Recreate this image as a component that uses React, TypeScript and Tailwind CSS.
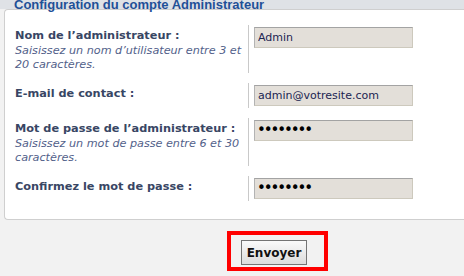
import React from "react";

const font = { fontFamily: '"DejaVu Sans", Verdana, sans-serif' };
const titleFont = { fontFamily: '"Liberation Sans", Arial, sans-serif' };

function Row({
  label,
  hint,
  value,
  tall,
  password,
}: {
  label: string;
  hint?: React.ReactNode;
  value: string;
  tall?: boolean;
  password?: boolean;
}) {
  return (
    <div className={`grid grid-cols-[243px_1fr] ${tall ? "h-[48px]" : "h-[25px]"}`}>
      <div className="pl-[10px] pt-[4px]">
        <div className="text-[11.3px] leading-[14px] font-bold text-[#384664] whitespace-nowrap">{label}</div>
        {hint && (
          <div className="mt-[1px] text-[11.2px] leading-[14px] italic text-[#52618a] pr-[4px]">{hint}</div>
        )}
      </div>
      <div className="border-l border-[#c9c9c9] pl-[5px] pt-[2px]">
        {password ? (
          <input
            readOnly
            type="password"
            value={value}
            className="block w-[159px] h-[21px] bg-[#e3dfd9] border border-[#cdc9bd] border-t-[#a3a3a3] border-l-[#b3b3b3] pl-[2px] text-[15px] tracking-[-2.1px] text-black outline-none"
            style={font}
          />
        ) : (
          <input
            readOnly
            type="text"
            value={value}
            className="block w-[159px] h-[21px] bg-[#e3dfd9] border border-[#cdc9bd] border-t-[#a3a3a3] border-l-[#b3b3b3] px-[3px] text-[11px] text-[#1b2552] outline-none"
            style={font}
          />
        )}
      </div>
    </div>
  );
}

export default function App() {
  return (
    <div className="w-[464px] h-[276px] bg-[#f2f2f2] overflow-hidden" style={font}>
      <div className="flex h-[9px] bg-[#dfe2e6] relative z-10">
        <div
          className="pl-[14px] -mt-[2px] h-[14px] text-[13px] leading-[14px] font-bold text-[#1f5097] whitespace-nowrap"
          style={titleFont}
        >
          Configuration du compte Administrateur
        </div>
      </div>
      <div className="ml-[4px] h-[211px] bg-white border border-r-0 border-[#cfcfcf] rounded-l-[4px] pt-[15px] flex flex-col gap-[10px]">
        <Row
          tall
          label="Nom de l’administrateur :"
          hint={<>Saisissez un nom d’utilisateur entre 3 et 20 caractères.</>}
          value="Admin"
        />
        <Row label="E-mail de contact :" value="admin@votresite.com" />
        <Row
          tall
          label="Mot de passe de l’administrateur :"
          hint={<>Saisissez un mot de passe entre 6 et 30 caractères.</>}
          value="12345678"
          password
        />
        <Row label="Confirmez le mot de passe :" value="12345678" password />
      </div>
      <div className="ml-[227px] mt-[11px] w-[101px] h-[40px] border-4 border-[#ff0000]">
        <button
          className="ml-[10px] mt-[5px] w-[66px] h-[25px] border border-[#747474] bg-gradient-to-b from-[#fafafa] to-[#dcdcdc] text-[12px] font-bold text-[#111111] flex items-center justify-center"
          style={font}
        >
          Envoyer
        </button>
      </div>
    </div>
  );
}
